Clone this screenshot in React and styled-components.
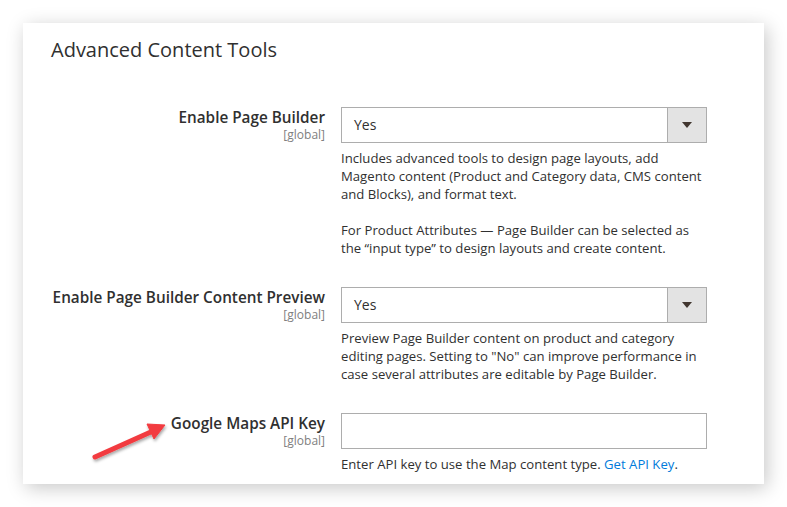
import React from 'react';
import styled, { createGlobalStyle } from 'styled-components';

const GlobalStyle = createGlobalStyle`
    body {
        margin: 0;
        background: #ffffff;
        font-family: "Open Sans", "Liberation Sans", sans-serif;
        color: #303030;
    }
`;

const Page = styled.div`
    width: 787px;
    height: 507px;
    padding: 23px 0 0 23px;
    box-sizing: border-box;
    position: relative;
    overflow: hidden;
`;

const Card = styled.div`
    width: 741px;
    height: 461px;
    box-sizing: border-box;
    background: #ffffff;
    box-shadow: 3px 4px 18px rgba(0, 0, 0, 0.22);
    padding: 14px 28px 0 28px;
`;

const Title = styled.h2`
    margin: 0 0 44px 0;
    font-size: 20px;
    font-weight: 400;
    line-height: 26px;
    color: #303030;
`;

const Row = styled.div`
    display: grid;
    grid-template-columns: 274px 366px;
    column-gap: 16px;
    margin-bottom: ${(p) => p.gap || 0}px;
`;

const LabelCol = styled.div`
    text-align: right;
`;

const Label = styled.div`
    font-size: 15.3px;
    font-weight: 600;
    line-height: 20px;
    color: #303030;
`;

const Scope = styled.div`
    font-size: 12px;
    line-height: 16px;
    color: #808080;
`;

const Select = styled.div`
    display: flex;
    height: 36px;
    box-sizing: border-box;
    border: 1px solid #adadad;
    background: #ffffff;
`;

const SelectValue = styled.div`
    flex: 1;
    padding-left: 12px;
    font-size: 14px;
    line-height: 34px;
    color: #303030;
`;

const SelectButton = styled.div`
    width: 38px;
    border-left: 1px solid #adadad;
    background: #e3e3e3;
    display: flex;
    align-items: center;
    justify-content: center;

    &::after {
        content: '';
        border-left: 5px solid transparent;
        border-right: 5px solid transparent;
        border-top: 6px solid #41362f;
    }
`;

const Input = styled.div`
    height: 36px;
    box-sizing: border-box;
    border: 1px solid #adadad;
    background: #ffffff;
`;

const Help = styled.p`
    margin: ${(p) => (p.first ? '6px' : '18px')} 0 0 0;
    font-size: 13.15px;
    line-height: 18px;
    color: #303030;
`;

const HelpLink = styled.a`
    color: #007bdb;
    text-decoration: none;
`;

const Arrow = styled.svg`
    position: absolute;
    left: 85px;
    top: 415px;
    overflow: visible;
`;

function Field({ label, children, gap }) {
    return (
        <Row gap={gap}>
            <LabelCol>
                <Label>{label}</Label>
                <Scope>[global]</Scope>
            </LabelCol>
            <div>{children}</div>
        </Row>
    );
}

export default function App() {
    return (
        <Page>
            <GlobalStyle />
            <Card>
                <Title>Advanced Content Tools</Title>
                <Field label="Enable Page Builder" gap={30}>
                    <Select>
                        <SelectValue>Yes</SelectValue>
                        <SelectButton />
                    </Select>
                    <Help first>
                        Includes advanced tools to design page layouts, add Magento content (Product and
                        Category data, CMS content and Blocks), and format text.
                    </Help>
                    <Help>
                        For Product Attributes — Page Builder can be selected as the “input type” to design
                        layouts and create content.
                    </Help>
                </Field>
                <Field label="Enable Page Builder Content Preview" gap={30}>
                    <Select>
                        <SelectValue>Yes</SelectValue>
                        <SelectButton />
                    </Select>
                    <Help first>
                        Preview Page Builder content on product and category editing pages. Setting to "No"
                        can improve performance in case several attributes are editable by Page Builder.
                    </Help>
                </Field>
                <Field label="Google Maps API Key">
                    <Input />
                    <Help first>
                        Enter API key to use the Map content type. <HelpLink href="#">Get API Key</HelpLink>.
                    </Help>
                </Field>
            </Card>
            {/* annotation arrow pointing at the API key label */}
            <Arrow width="90" height="50" viewBox="85 415 90 50">
                <defs>
                    <filter id="shadow" x="-30%" y="-30%" width="160%" height="160%">
                        <feDropShadow dx="1" dy="2" stdDeviation="1.5" floodColor="#000" floodOpacity="0.35" />
                    </filter>
                </defs>
                <g filter="url(#shadow)" fill="#f23b3f" stroke="#f23b3f">
                    <line x1="95" y1="457" x2="153" y2="431" strokeWidth="5" strokeLinecap="round" />
                    <polygon points="165,425 147,424 154,439" strokeWidth="1" strokeLinejoin="round" />
                </g>
            </Arrow>
        </Page>
    );
}
